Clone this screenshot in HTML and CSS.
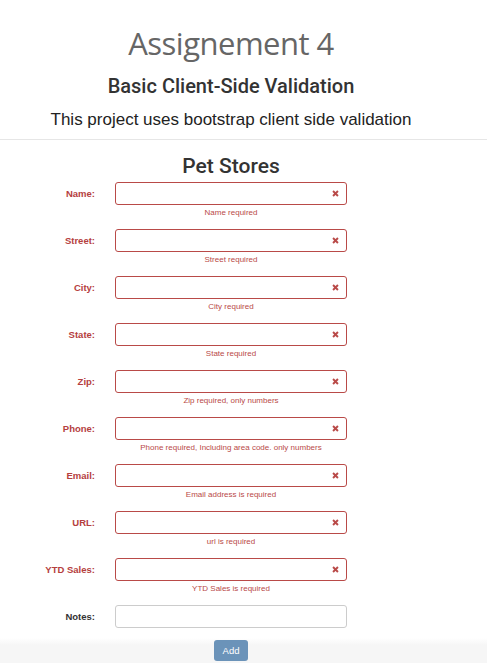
FILE: index.html
```html
<!DOCTYPE html>
<html lang="en">
<head>
<meta charset="utf-8">
<title>Assignement 4</title>
<link rel="stylesheet" href="styles.css">
</head>
<body>
<header class="page-header">
  <h1 class="title">Assignement 4</h1>
  <h2 class="subtitle">Basic Client-Side Validation</h2>
  <p class="lead">This project uses bootstrap client side validation</p>
</header>
<hr class="divider">
<main class="form-wrap">
  <h3 class="form-title">Pet Stores</h3>
  <form class="form-grid">
    <label class="lbl err">Name:</label>
    <div class="field err"><div class="input"><svg class="x" viewBox="0 0 8 8"><path d="M1.2 1.2 6.8 6.8M6.8 1.2 1.2 6.8"/></svg></div><div class="help">Name required</div></div>

    <label class="lbl err">Street:</label>
    <div class="field err"><div class="input"><svg class="x" viewBox="0 0 8 8"><path d="M1.2 1.2 6.8 6.8M6.8 1.2 1.2 6.8"/></svg></div><div class="help">Street required</div></div>

    <label class="lbl err">City:</label>
    <div class="field err"><div class="input"><svg class="x" viewBox="0 0 8 8"><path d="M1.2 1.2 6.8 6.8M6.8 1.2 1.2 6.8"/></svg></div><div class="help">City required</div></div>

    <label class="lbl err">State:</label>
    <div class="field err"><div class="input"><svg class="x" viewBox="0 0 8 8"><path d="M1.2 1.2 6.8 6.8M6.8 1.2 1.2 6.8"/></svg></div><div class="help">State required</div></div>

    <label class="lbl err">Zip:</label>
    <div class="field err"><div class="input"><svg class="x" viewBox="0 0 8 8"><path d="M1.2 1.2 6.8 6.8M6.8 1.2 1.2 6.8"/></svg></div><div class="help">Zip required, only numbers</div></div>

    <label class="lbl err">Phone:</label>
    <div class="field err"><div class="input"><svg class="x" viewBox="0 0 8 8"><path d="M1.2 1.2 6.8 6.8M6.8 1.2 1.2 6.8"/></svg></div><div class="help">Phone required, Including area code. only numbers</div></div>

    <label class="lbl err">Email:</label>
    <div class="field err"><div class="input"><svg class="x" viewBox="0 0 8 8"><path d="M1.2 1.2 6.8 6.8M6.8 1.2 1.2 6.8"/></svg></div><div class="help">Email address is required</div></div>

    <label class="lbl err">URL:</label>
    <div class="field err"><div class="input"><svg class="x" viewBox="0 0 8 8"><path d="M1.2 1.2 6.8 6.8M6.8 1.2 1.2 6.8"/></svg></div><div class="help">url is required</div></div>

    <label class="lbl err">YTD Sales:</label>
    <div class="field err"><div class="input"><svg class="x" viewBox="0 0 8 8"><path d="M1.2 1.2 6.8 6.8M6.8 1.2 1.2 6.8"/></svg></div><div class="help">YTD Sales is required</div></div>

    <label class="lbl">Notes:</label>
    <div class="field"><div class="input plain"></div></div>

    <div></div>
    <div class="actions"><button type="button" class="btn">Add</button></div>
  </form>
</main>
</body>
</html>
```

FILE: styles.css
```css
html, body {
  margin: 0;
  padding: 0;
  background: #fff;
}
body {
  font-family: "Liberation Sans", Arial, sans-serif;
  color: #333;
  height: 663px;
  background: linear-gradient(to bottom, #fff 0, #fff 638px, #f6f6f6 645px, #f6f6f6 663px);
}
.page-header {
  width: 462px;
  text-align: center;
  padding-top: 25px;
}
.title {
  margin: 0;
  font-family: "Open Sans", sans-serif;
  font-weight: 400;
  font-size: 31px;
  line-height: 36px;
  color: #666;
  letter-spacing: -0.5px;
}
.subtitle {
  margin: 13px 0 0;
  font-family: Roboto, "Liberation Sans", sans-serif;
  font-size: 20px;
  line-height: 24px;
  font-weight: 500;
  color: #333;
}
.lead {
  margin: 12px 0 0;
  font-size: 17px;
  line-height: 20px;
  color: #222;
}
.divider {
  margin: 9px 0 0;
  border: 0;
  border-top: 1px solid #e6e6e6;
  height: 0;
}
.form-wrap {
  width: 462px;
}
.form-title {
  margin: 13px 0 0;
  text-align: center;
  font-family: Roboto, "Liberation Sans", sans-serif;
  font-size: 21px;
  line-height: 26px;
  font-weight: 500;
  color: #333;
}
.form-grid {
  margin-top: 3px;
  display: grid;
  grid-template-columns: 95px 232px;
  column-gap: 20px;
  row-gap: 11px;
}
.lbl {
  font-size: 9.5px;
  font-weight: 700;
  color: #333;
  text-align: right;
  height: 23px;
  line-height: 23px;
}
.lbl.err {
  color: #b5403e;
}
.field {
  display: flex;
  flex-direction: column;
}
.input {
  position: relative;
  height: 23px;
  box-sizing: border-box;
  border: 1px solid #b94a48;
  border-radius: 3px;
  background: #fff;
}
.input.plain {
  border-color: #ccc;
}
.x {
  position: absolute;
  right: 7px;
  top: 7px;
  width: 7px;
  height: 7px;
  fill: none;
  stroke: #b94a48;
  stroke-width: 2.2;
}
.help {
  margin-top: 3px;
  font-size: 8px;
  line-height: 10px;
  color: #b94a48;
  text-align: center;
}
.actions {
  display: flex;
  justify-content: center;
  padding-top: 1px;
}
.btn {
  width: 34px;
  height: 21px;
  padding: 0;
  border: 0;
  border-radius: 3px;
  background: #6b93b9;
  color: #fff;
  font-family: "Liberation Sans", Arial, sans-serif;
  font-size: 9.5px;
}
```
